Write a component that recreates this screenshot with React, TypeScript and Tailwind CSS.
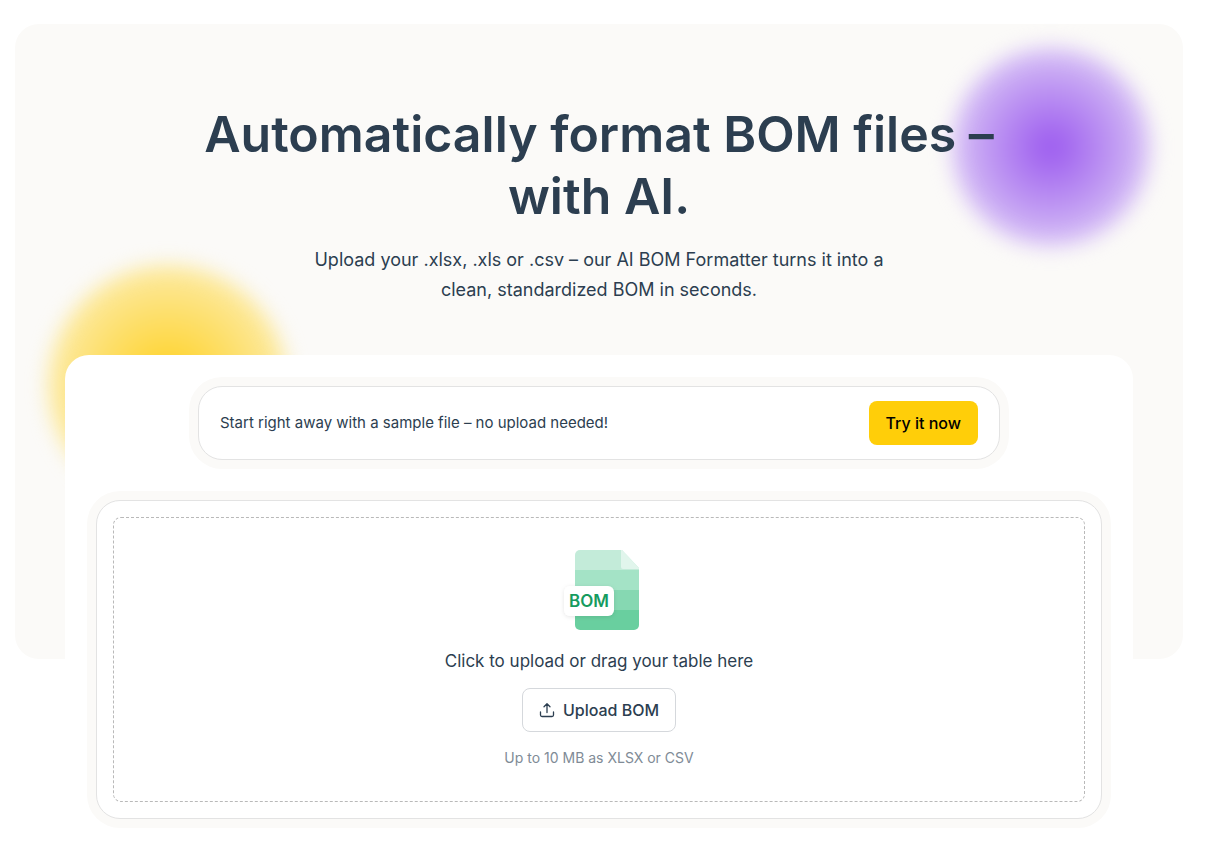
import { useRef, useState } from 'react'

function BomFileIcon() {
  return (
    <svg width="84" height="84" viewBox="-4 0 84 84" aria-hidden="true">
      <defs>
        <clipPath id="sheet">
          <path d="M19 2h42l17 18v57a5 5 0 0 1-5 5H19a5 5 0 0 1-5-5V7a5 5 0 0 1 5-5z" />
        </clipPath>
        <filter id="tagShadow" x="-20%" y="-20%" width="140%" height="160%">
          <feDropShadow dx="0" dy="1" stdDeviation="2" floodColor="#000" floodOpacity="0.1" />
        </filter>
      </defs>
      <g clipPath="url(#sheet)">
        <rect x="14" y="2" width="64" height="20" fill="#c3ebd9" />
        <rect x="14" y="22" width="64" height="20" fill="#a4e3c6" />
        <rect x="14" y="42" width="64" height="20" fill="#86d8b2" />
        <rect x="14" y="62" width="64" height="20" fill="#69cf9f" />
        <path d="M60 2v17a2 2 0 0 0 2 2h18V2z" fill="#e1f5ec" />
      </g>
      <rect x="3" y="38" width="50" height="30" rx="6" fill="#fff" filter="url(#tagShadow)" />
      <text
        x="28" y="59" textAnchor="middle" fontSize="17" fontWeight="600" fill="#169b5f"
        className="font-['Inter',sans-serif]"
      >
        BOM
      </text>
    </svg>
  )
}

function UploadIcon() {
  return (
    <svg width="16" height="16" viewBox="0 0 16 16" fill="none" stroke="#2c3e50"
      strokeWidth="1.3" strokeLinecap="round" strokeLinejoin="round" aria-hidden="true">
      <path d="M8 10.5V2M5 4.8l3-3 3 3M1.5 10v3a1.5 1.5 0 0 0 1.5 1.5h10a1.5 1.5 0 0 0 1.5-1.5v-3" />
    </svg>
  )
}

export default function App() {
  const fileInput = useRef<HTMLInputElement>(null)
  const [fileName, setFileName] = useState('')

  function handleDrop(e: React.DragEvent) {
    e.preventDefault()
    const file = e.dataTransfer.files[0]
    if (file) setFileName(file.name)
  }

  return (
    <main className="pt-6 pb-2 pl-[15px] pr-[30px] bg-white text-[#2c3e50] font-['Inter',sans-serif]">
      {/* Hero */}
      <section className="relative isolate px-[50px] pt-[79px] rounded-3xl">
        <div className="absolute inset-x-0 top-0 bottom-[182px] -z-20 rounded-3xl bg-[#fbfaf8]" />
        <div className="absolute top-[23px] right-8 -z-10 size-[200px] rounded-full blur-[10px] bg-[radial-gradient(circle,#9b59ef_0%,#c4a1f3_50%,#ddcbf6_72%)]" />
        <div className="absolute top-[241px] left-[33px] -z-10 size-[240px] rounded-full blur-[10px] bg-[radial-gradient(circle,#ffd01c_0%,#fde27a_50%,#fceba8_72%)]" />

        <div className="text-center">
          <h1 className="mx-auto max-w-[850px] text-[50px] leading-[62px] font-semibold">
            Automatically format BOM files – with AI.
          </h1>
          <p className="mx-auto mt-[18px] max-w-[600px] text-lg leading-[30px]">
            Upload your .xlsx, .xls or .csv – our AI BOM Formatter turns it into a clean, standardized BOM in seconds.
          </p>
        </div>

        <div className="mt-[50px] rounded-3xl bg-white px-[31px] pt-[31px] pb-[22px]">
          {/* Sample file */}
          <div className="mx-auto max-w-[802px] flex items-center justify-between gap-4 rounded-3xl border border-[#e3e3e3] bg-white px-[21px] py-[14px] ring-9 ring-[#fbfaf8]">
            <p className="text-[15px] leading-5">Start right away with a sample file – no upload needed!</p>
            <button
              type="button"
              onClick={() => setFileName('sample.xlsx')}
              className="h-11 px-[17px] shrink-0 rounded-lg bg-[#ffce09] text-base font-medium text-black"
            >
              Try it now
            </button>
          </div>

          {/* Upload */}
          <div className="mt-10 rounded-3xl border border-[#e3e3e3] bg-white p-4 ring-9 ring-[#fbfaf8]">
            <div
              onDragOver={e => e.preventDefault()}
              onDrop={handleDrop}
              className="flex flex-col items-center rounded-lg border border-dashed border-[#b9b9b9] pt-[30px] pb-[33px]"
            >
              <BomFileIcon />
              <p className="mt-[17px] text-[17px] leading-6">Click to upload or drag your table here</p>
              <input
                ref={fileInput}
                type="file"
                accept=".xlsx,.xls,.csv"
                aria-label="Upload BOM"
                className="hidden"
                onChange={e => setFileName(e.target.files?.[0]?.name ?? '')}
              />
              <button
                type="button"
                onClick={() => fileInput.current?.click()}
                className="mt-[15px] h-11 px-4 flex items-center gap-2 rounded-lg border border-[#d5d8dc] bg-white text-base font-medium"
              >
                <UploadIcon />
                Upload BOM
              </button>
              <p className="mt-4 text-sm text-[#808b96]">
                {fileName || 'Up to 10 MB as XLSX or CSV'}
              </p>
            </div>
          </div>
        </div>
      </section>
    </main>
  )
}
